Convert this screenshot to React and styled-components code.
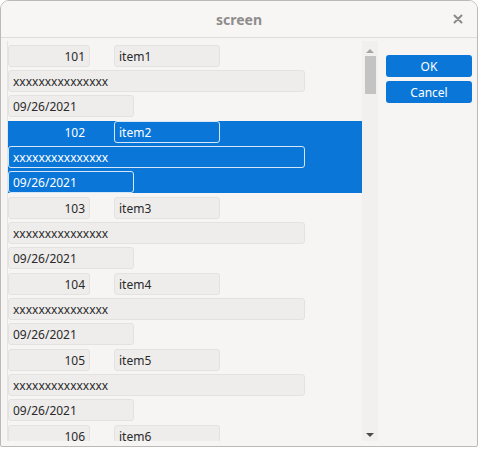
import React from 'react';
import styled, { createGlobalStyle } from 'styled-components';

const GlobalStyle = createGlobalStyle`
  html, body {
    margin: 0;
    padding: 0;
    background: #ffffff;
  }
  * {
    box-sizing: border-box;
  }
`;

const records = [101, 102, 103, 104, 105, 106].map((id, i) => ({
  id,
  name: `item${i + 1}`,
  text: 'xxxxxxxxxxxxxxx',
  date: '09/26/2021',
}));

const App = () => {
  const selected = 102;

  return (
    <>
      <GlobalStyle />
      <Window>
        <TitleBar>
          <Title>screen</Title>
          <CloseButton>
            <svg width="10" height="10" viewBox="0 0 10 10">
              <path d="M1.5 1.5 L8.5 8.5 M8.5 1.5 L1.5 8.5" stroke="#8a8a8a" strokeWidth="2" strokeLinecap="round" />
            </svg>
          </CloseButton>
        </TitleBar>
        <Body>
          <ListPanel>
            <ListContent>
              {records.map((r) => {
                const active = r.id === selected;
                return (
                  <Record key={r.id} $active={active}>
                    <TopRow>
                      <NumberField $active={active}>{r.id}</NumberField>
                      <Field $active={active} $width={106}>{r.name}</Field>
                    </TopRow>
                    <Field $active={active} $width={297}>{r.text}</Field>
                    <Field $active={active} $width={126}>{r.date}</Field>
                  </Record>
                );
              })}
            </ListContent>
            <ScrollBar>
              <Arrow $up />
              <Track>
                <Thumb />
              </Track>
              <Arrow />
            </ScrollBar>
          </ListPanel>
          <Buttons>
            <Button>OK</Button>
            <Button>Cancel</Button>
          </Buttons>
        </Body>
      </Window>
    </>
  );
};

const Window = styled.div`
  width: 478px;
  height: 447px;
  display: flex;
  flex-direction: column;
  background: #f6f5f4;
  border: 1px solid #bcbab8;
  border-radius: 9px 9px 2px 2px;
  overflow: hidden;
  font-family: "Noto Sans", "DejaVu Sans", sans-serif;
`;

const TitleBar = styled.div`
  height: 37px;
  flex-shrink: 0;
  display: flex;
  align-items: center;
  justify-content: center;
  position: relative;
  background: #f7f6f5;
  border-bottom: 1px solid #dfdcd9;
`;

const Title = styled.div`
  font-size: 14px;
  font-weight: bold;
  color: #8e8d8c;
`;

const CloseButton = styled.div`
  position: absolute;
  right: 14px;
  top: 13px;
  width: 10px;
  height: 10px;
  display: flex;
`;

const Body = styled.div`
  flex: 1;
  min-height: 0;
  display: flex;
  padding: 3px 5px 5px 6px;
  gap: 8px;
`;

const ListPanel = styled.div`
  width: 371px;
  display: flex;
  border-left: 1px solid #e6e4e2;
  overflow: hidden;
`;

const ListContent = styled.div`
  flex: 1;
  display: flex;
  flex-direction: column;
  padding-top: 4px;
  overflow: hidden;
`;

const Record = styled.div`
  display: flex;
  flex-direction: column;
  gap: 3px;
  flex-shrink: 0;
  margin-bottom: 4px;
  background: ${(p) => (p.$active ? '#0a76d8' : 'transparent')};
`;

const TopRow = styled.div`
  display: flex;
  gap: 24px;
`;

const Field = styled.div`
  width: ${(p) => p.$width}px;
  height: 22px;
  display: flex;
  align-items: center;
  padding: 0 4px;
  font-size: 12px;
  color: ${(p) => (p.$active ? '#ffffff' : '#2a2a2a')};
  background: ${(p) => (p.$active ? 'transparent' : '#eeedec')};
  border: 1px solid ${(p) => (p.$active ? '#d4e6f7' : '#e4e2e0')};
  border-radius: 3px;
  white-space: nowrap;
`;

const NumberField = styled(Field)`
  width: 82px;
  justify-content: flex-end;
  border-color: ${(p) => (p.$active ? 'transparent' : '#e4e2e0')};
`;

const ScrollBar = styled.div`
  width: 16px;
  flex-shrink: 0;
  display: flex;
  flex-direction: column;
  align-items: center;
  background: #f1f0ef;
  padding: 8px 0 4px;
`;

const Arrow = styled.div`
  width: 0;
  height: 0;
  border-left: 4px solid transparent;
  border-right: 4px solid transparent;
  ${(p) =>
    p.$up
      ? 'border-bottom: 4px solid #a6a6a6;'
      : 'border-top: 4px solid #4a4a4a;'}
`;

const Track = styled.div`
  flex: 1;
  width: 100%;
  display: flex;
  justify-content: center;
  padding-top: 3px;
`;

const Thumb = styled.div`
  width: 11px;
  height: 38px;
  background: #c3c3c3;
`;

const Buttons = styled.div`
  flex: 1;
  display: flex;
  flex-direction: column;
  gap: 4px;
  padding-top: 14px;
`;

const Button = styled.button`
  height: 22px;
  border: none;
  border-radius: 3px;
  background: #0a76d8;
  color: #ffffff;
  font-family: "Noto Sans", "DejaVu Sans", sans-serif;
  font-size: 12px;
  padding: 0;
`;

export default App;
